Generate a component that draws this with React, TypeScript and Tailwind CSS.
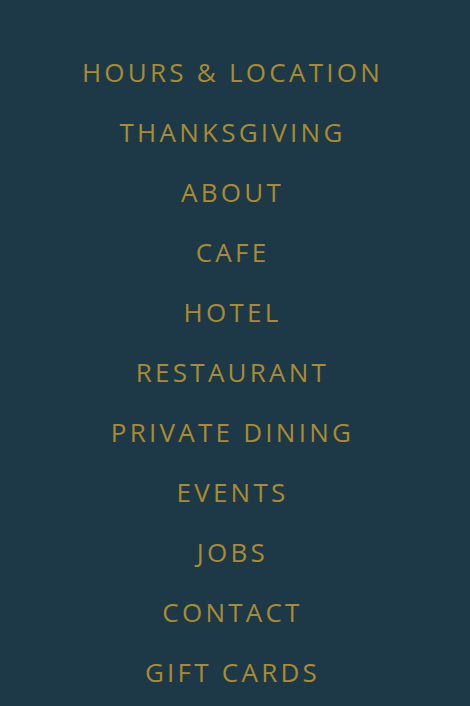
import React from "react";

const items = [
  "HOURS & LOCATION",
  "THANKSGIVING",
  "ABOUT",
  "CAFE",
  "HOTEL",
  "RESTAURANT",
  "PRIVATE DINING",
  "EVENTS",
  "JOBS",
  "CONTACT",
  "GIFT CARDS",
];

export default function App() {
  return (
    <div
      className="w-[470px] h-[706px] bg-[#1d3947] overflow-hidden pt-[42px] pr-[5px]"
      style={{ fontFamily: '"Open Sans", "Noto Sans", sans-serif' }}
    >
      <nav className="flex flex-col items-center">
        {items.map((t) => (
          <a
            key={t}
            href="#"
            className="block h-[60px] leading-[60px] text-[26px] tracking-[0.125em] text-[#a98b30] whitespace-nowrap"
          >
            {t}
          </a>
        ))}
      </nav>
    </div>
  );
}
